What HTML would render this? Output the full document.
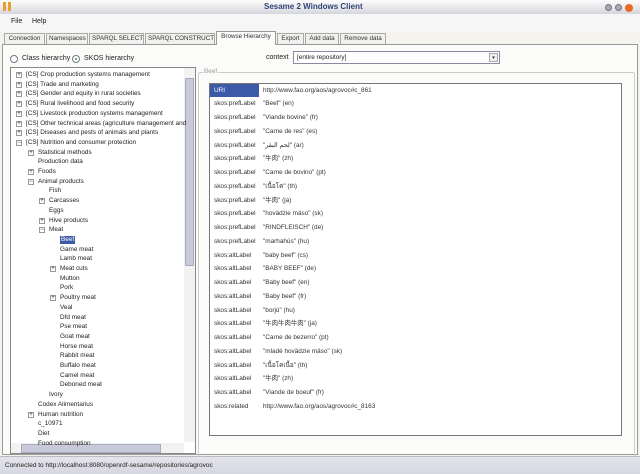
<!DOCTYPE html>
<html><head><meta charset="utf-8"><style>
*{margin:0;padding:0;box-sizing:border-box}
body{width:640px;height:474px;background:#f4f3ee;font-family:"Liberation Sans","Noto Sans CJK SC",sans-serif;font-size:7px;color:#222;position:relative;overflow:hidden}
.a{position:absolute;white-space:nowrap}
#title{left:0;top:0;width:640px;height:14px;background:linear-gradient(#fdfdfd,#e6e6ea 60%,#d4d4dc);}
#menu{left:0;top:14px;width:640px;height:18px;background:#f6f6f6}
.tab{position:absolute;top:33px;height:11px;border:1px solid #aaa;border-bottom:none;background:#f0f0ee;font-size:6.3px;line-height:10px;padding:0 2px;color:#333;white-space:nowrap;overflow:hidden;text-align:center}
#body{left:2px;top:44px;width:636px;height:411px;border:1px solid #999;background:#fbfbfa}
#tree{left:10px;top:67px;width:186px;height:387px;border:1px solid #888;background:#fff;overflow:hidden}
.t{position:absolute;font-size:6.4px;line-height:8px;white-space:nowrap;color:#222}
.p{position:absolute;width:6px;height:6px;border:1px solid #999;background:#fff;font-size:6px;line-height:4px;text-align:center;color:#333}
#tbl{left:209px;top:83px;width:413px;height:353px;border:1px solid #777;background:#fff}
.r{position:absolute;left:4px;font-size:6.4px;line-height:8px;color:#333;white-space:nowrap}
.v{position:absolute;left:53px;font-size:6.4px;line-height:8px;height:8px;color:#333;white-space:nowrap}
#status{left:0;top:456px;width:640px;height:18px;background:linear-gradient(#e4e4ec,#d6d6e2);border-top:1px solid #bbb;font-size:6.5px;line-height:17px;padding-left:5px}
</style></head><body>
<div id="title" class="a"><div class="a" style="left:3px;top:2px;width:3px;height:9px;background:#e8a030"></div><div class="a" style="left:8px;top:2px;width:3px;height:9px;background:#e8a030"></div>
<div class="a" style="left:264px;top:2px;font-size:8px;font-weight:bold;color:#334477">Sesame 2 Windows Client</div>
<div class="a" style="left:605px;top:4px;width:7px;height:7px;border-radius:50%;background:#a8a8c0;border:1px solid #777"></div>
<div class="a" style="left:615px;top:4px;width:7px;height:7px;border-radius:50%;background:#a8a8c0;border:1px solid #777"></div>
<div class="a" style="left:625px;top:4px;width:8px;height:8px;border-radius:50%;background:#e86a2a"></div></div>
<div id="menu" class="a"><span class="a" style="left:11px;top:4px">File</span><span class="a" style="left:32px;top:4px">Help</span></div>
<div id="body" class="a"></div>
<div class="tab" style="left:4px;width:41px">Connection</div>
<div class="tab" style="left:46px;width:42px">Namespaces</div>
<div class="tab" style="left:89px;width:55px">SPARQL SELECT</div>
<div class="tab" style="left:145px;width:70px">SPARQL CONSTRUCT</div>
<div class="tab" style="left:216px;top:31px;height:14px;width:60px;background:#fbfbfa;border-color:#999">Browse Hierarchy</div>
<div class="tab" style="left:277px;width:27px">Export</div>
<div class="tab" style="left:305px;width:34px">Add data</div>
<div class="tab" style="left:340px;width:46px">Remove data</div>
<div class="a" style="left:10px;top:55px;width:8px;height:8px;border:1px solid #778;border-radius:50%;background:#fff"></div>
<span class="a" style="left:22px;top:55px">Class hierarchy</span>
<div class="a" style="left:72px;top:55px;width:8px;height:8px;border:1px solid #778;border-radius:50%;background:#fff"><div style="margin:2px;width:2px;height:2px;background:#393;border-radius:50%"></div></div>
<span class="a" style="left:84px;top:55px">SKOS hierarchy</span>
<span class="a" style="left:266px;top:54px">context</span>
<div class="a" style="left:293px;top:51px;width:207px;height:13px;border:1px solid #8a8aa0;background:#fff;padding:2px 3px;font-size:6.4px">[entire repository]<div class="a" style="right:1px;top:1px;width:9px;height:9px;border:1px solid #aaa;background:#eee;font-size:5px;text-align:center;line-height:8px">▾</div></div>
<div class="a" style="left:198px;top:72px;width:437px;height:389px;border:1px solid #ccc;border-radius:2px"></div>
<span class="a" style="left:203px;top:68px;color:#999;background:#fbfbfa;padding:0 1px;font-size:6.4px">Beef</span>
<div id="tree" class="a">
<div class="a" style="left:173px;top:0;width:11px;height:374px;background:#f2f2f2"></div>
<div class="a" style="left:174px;top:10px;width:9px;height:188px;background:#c8cadc;border:1px solid #aab"></div>
<div class="a" style="left:0;top:375px;width:173px;height:11px;background:#f2f2f2"></div>
<div class="a" style="left:10px;top:376px;width:140px;height:9px;background:#c8cadc;border:1px solid #aab"></div>
<div id="tn"></div>
</div>
<div id="tbl" class="a"><div class="a" style="left:0;top:0;width:49px;height:13px;background:#3b5aa8"></div><div id="tr"></div></div>
<div id="status" class="a">Connected to http://localhost:8080/openrdf-sesame/repositories/agrovoc</div>
<script>
var T=[[0,1,"[CS] Crop production systems management"],[0,1,"[CS] Trade and marketing"],[0,1,"[CS] Gender and equity in rural societies"],[0,1,"[CS] Rural livelihood and food security"],[0,1,"[CS] Livestock production systems management"],[0,1,"[CS] Other technical areas (agriculture management and"],[0,1,"[CS] Diseases and pests of animals and plants"],[0,2,"[CS] Nutrition and consumer protection"],[1,1,"Statistical methods"],[1,0,"Production data"],[1,1,"Foods"],[1,2,"Animal products"],[2,0,"Fish"],[2,1,"Carcasses"],[2,0,"Eggs"],[2,1,"Hive products"],[2,2,"Meat"],[3,0,"Beef"],[3,0,"Game meat"],[3,0,"Lamb meat"],[3,1,"Meat cuts"],[3,0,"Mutton"],[3,0,"Pork"],[3,1,"Poultry meat"],[3,0,"Veal"],[3,0,"Dfd meat"],[3,0,"Pse meat"],[3,0,"Goat meat"],[3,0,"Horse meat"],[3,0,"Rabbit meat"],[3,0,"Buffalo meat"],[3,0,"Camel meat"],[3,0,"Deboned meat"],[2,0,"Ivory"],[1,0,"Codex Alimentarius"],[1,1,"Human nutrition"],[1,0,"c_10971"],[1,0,"Diet"],[1,0,"Food consumption"]];
var h="",X=[15,27,38,49];
T.forEach(function(e,i){var y=3+i*9.7,x=X[e[0]];
if(e[1])h+='<div class="p" style="left:'+(x-10)+'px;top:'+(y+1)+'px">'+(e[1]==1?'+':'−')+'</div>';
var s=i==17?'background:#3b5aa8;color:#fff;padding:0 1px;':'';
h+='<div class="t" style="left:'+x+'px;top:'+y+'px;'+s+'">'+e[2]+'</div>';});
document.getElementById('tn').innerHTML=h;
var R=[["URI","http://www.fao.org/aos/agrovoc#c_861"],["skos:prefLabel","\"Beef\" (en)"],["skos:prefLabel","\"Viande bovine\" (fr)"],["skos:prefLabel","\"Carne de res\" (es)"],["skos:prefLabel","\"لحم البقر\" (ar)"],["skos:prefLabel","\"牛肉\" (zh)"],["skos:prefLabel","\"Carne de bovino\" (pt)"],["skos:prefLabel","\"เนื้อโค\" (th)"],["skos:prefLabel","\"牛肉\" (ja)"],["skos:prefLabel","\"hovädzie mäso\" (sk)"],["skos:prefLabel","\"RINDFLEISCH\" (de)"],["skos:prefLabel","\"marhahús\" (hu)"],["skos:altLabel","\"baby beef\" (cs)"],["skos:altLabel","\"BABY BEEF\" (de)"],["skos:altLabel","\"Baby beef\" (en)"],["skos:altLabel","\"Baby beef\" (fr)"],["skos:altLabel","\"borjú\" (hu)"],["skos:altLabel","\"牛肉牛肉牛肉\" (ja)"],["skos:altLabel","\"Carne de bezerro\" (pt)"],["skos:altLabel","\"mladé hovädzie mäso\" (sk)"],["skos:altLabel","\"เนื้อโคเนื้อ\" (th)"],["skos:altLabel","\"牛肉\" (zh)"],["skos:altLabel","\"Viande de boeuf\" (fr)"],["skos:related","http://www.fao.org/aos/agrovoc#c_8163"]];
h="";R.forEach(function(e,i){var y=2.5+i*13.75;var c=i==0?'color:#fff;':'';
h+='<div class="r" style="top:'+y+'px;'+c+'">'+e[0]+'</div><div class="v" style="top:'+y+'px">'+e[1]+'</div>';});
document.getElementById('tr').innerHTML=h;
</script>
</body></html>
